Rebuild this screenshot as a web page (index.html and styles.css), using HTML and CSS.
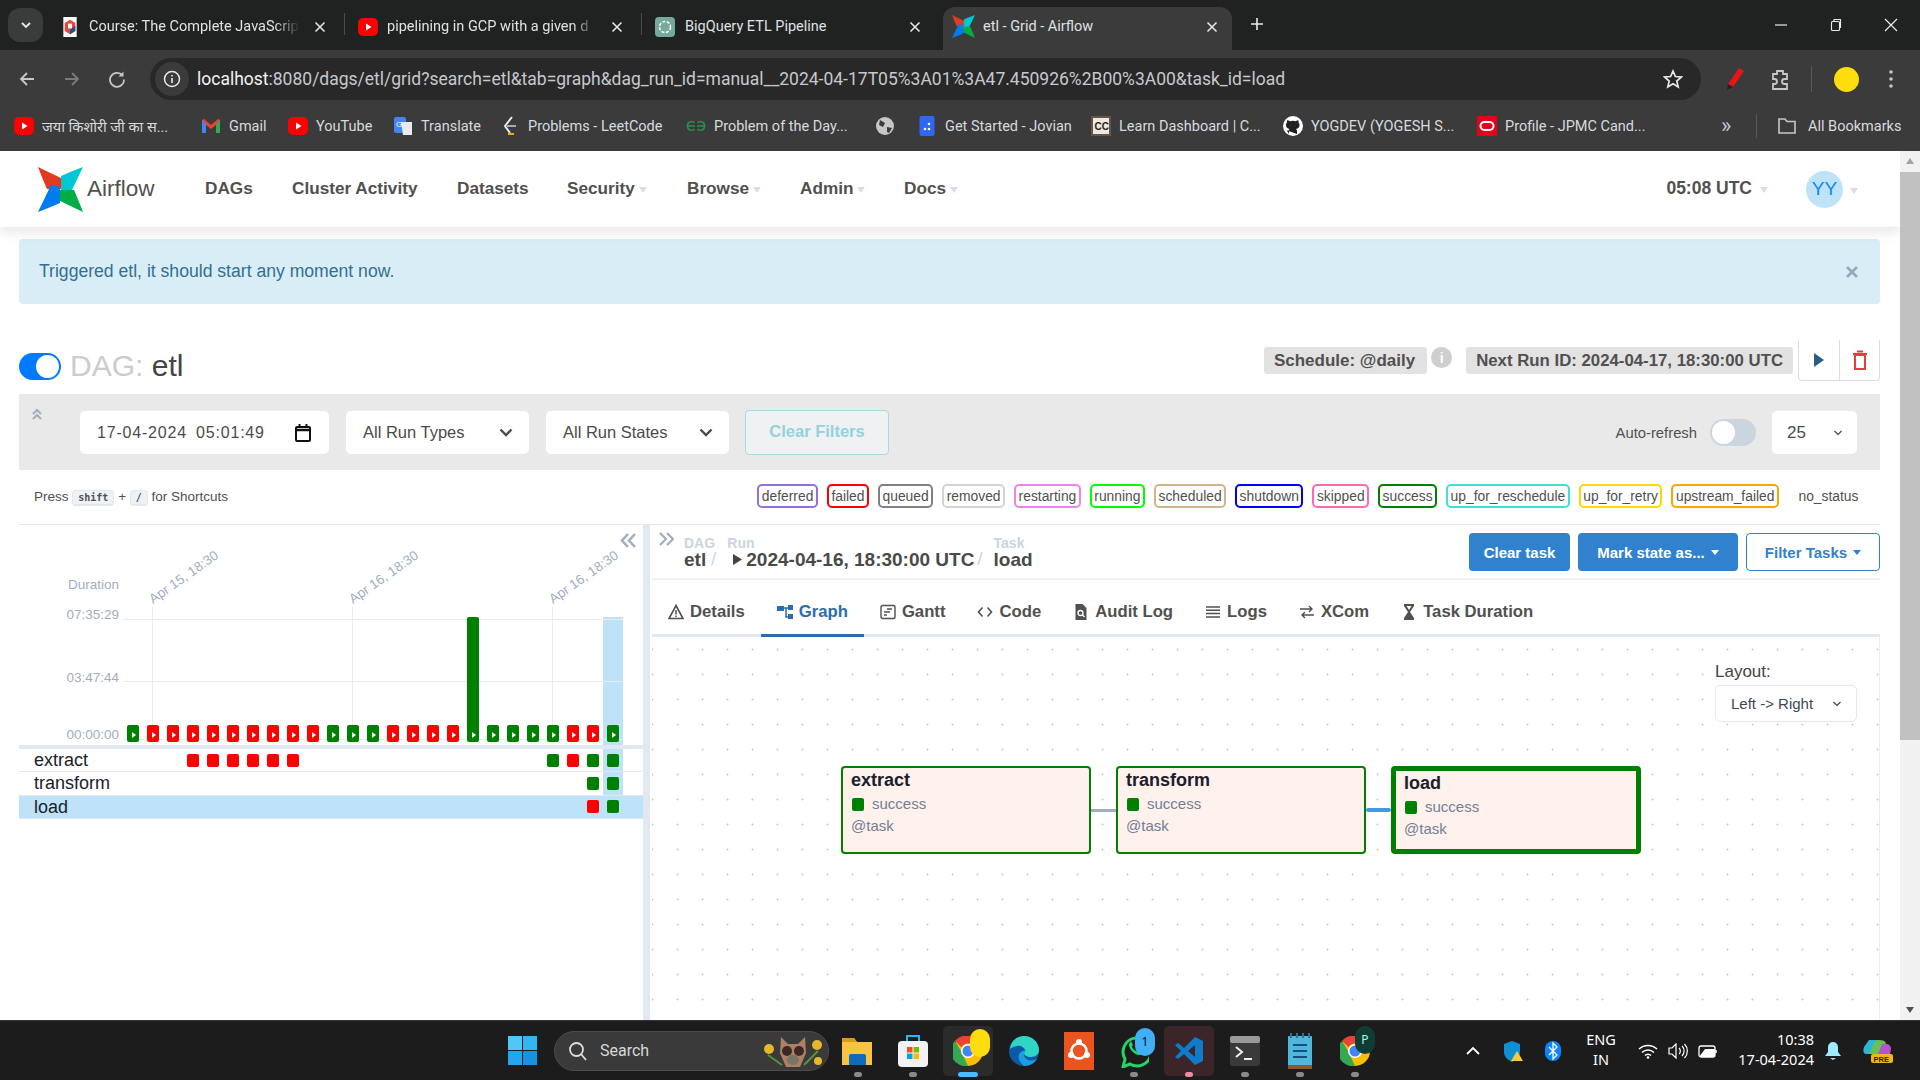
FILE: index.html
```html
<!DOCTYPE html>
<html lang="en">
<head>
<meta charset="utf-8">
<title>etl - Grid - Airflow</title>
<link rel="stylesheet" href="styles.css">
</head>
<body>
<svg class="defs" width="0" height="0" aria-hidden="true">
  <defs>
    <symbol id="yt" viewBox="0 0 20 20"><rect x="0" y="1" width="20" height="18" rx="5" fill="#f00"/><path d="M8 6.500l5.500 3.500L8 13.500z" fill="#fff"/></symbol>
    <symbol id="close" viewBox="0 0 12 12"><path d="M1.500 1.500l9 9M10.500 1.500l-9 9" stroke="#e8eaed" stroke-width="1.500" fill="none"/></symbol>
    <symbol id="logo" viewBox="0 0 45 45">
      <path d="M0 0L27 13C27 20 24 22 22 22H9C6 15 3 8 0 0z" fill="#e43921"/>
      <path d="M45 0L32 27C25 27 23 24 23 22V9C30 6 37 3 45 0z" fill="#00c7d4"/>
      <path d="M45 45L18 32C18 25 21 23 23 23H36C39 30 42 37 45 45z" fill="#00ad46"/>
      <path d="M0 45L13 18C20 18 22 21 22 23V36C15 39 8 42 0 45z" fill="#017cee"/>
    </symbol>
    <symbol id="chev" viewBox="0 0 14 9"><path d="M1.500 1.500L7 7l5.500-5.500" stroke="#4a4a4a" stroke-width="2.400" fill="none"/></symbol>
    <symbol id="chevs" viewBox="0 0 10 6"><path d="M1.500 1l3.500 3.500L8.500 1" stroke="#444" stroke-width="1.200" fill="none"/></symbol>
    <g id="gb"><rect width="12" height="17" rx="2" fill="#008000"/><path d="M5 7l4 3-4 3z" fill="#fff"/></g>
    <g id="rb"><rect width="12" height="17" rx="2" fill="#f00"/><path d="M5 7l4 3-4 3z" fill="#fff"/></g>
  </defs>
</svg>

<header class="tabstrip">
  <div class="tab-menu"><svg width="12" height="8" viewBox="0 0 12 8"><path d="M2 2l4 4 4-4" stroke="#e8eaed" stroke-width="1.800" fill="none"/></svg></div>
  <div class="tab t1">
    <svg class="fav" viewBox="0 0 20 30"><rect width="20" height="30" fill="#fff"/><path d="M10 4l8 5v12l-8 5-8-5V9z" fill="#e8483b"/><path d="M10 26l8-5V13l-8 6z" fill="#2a4b8d"/><path d="M7 10h6v7H7z" fill="#fff"/></svg>
    <span class="tab-title">Course: The Complete JavaScrip</span>
    <svg class="x"><use href="#close"/></svg>
  </div>
  <i class="tab-sep"></i>
  <div class="tab t2">
    <svg class="fav"><use href="#yt"/></svg>
    <span class="tab-title">pipelining in GCP with a given d</span>
    <svg class="x"><use href="#close"/></svg>
  </div>
  <i class="tab-sep"></i>
  <div class="tab t3">
    <svg class="fav" viewBox="0 0 20 20"><rect width="20" height="20" rx="4" fill="#74aa9c"/><circle cx="10" cy="10" r="5.500" fill="none" stroke="#fff" stroke-width="1.500" stroke-dasharray="3 1.500"/></svg>
    <span class="tab-title">BigQuery ETL Pipeline</span>
    <svg class="x"><use href="#close"/></svg>
  </div>
  <div class="tab active">
    <svg class="fav"><use href="#logo"/></svg>
    <span class="tab-title">etl - Grid - Airflow</span>
    <svg class="x"><use href="#close"/></svg>
  </div>
  <div class="tab-plus"><svg width="14" height="14" viewBox="0 0 14 14"><path d="M7 1v12M1 7h12" stroke="#e8eaed" stroke-width="1.600"/></svg></div>
  <div class="win-controls">
    <svg width="14" height="14" viewBox="0 0 14 14"><path d="M1 7h12" stroke="#e8eaed" stroke-width="1.200"/></svg>
    <svg width="14" height="14" viewBox="0 0 14 14"><rect x="2.500" y="3.500" width="8" height="9" rx="1" fill="none" stroke="#e8eaed" stroke-width="1.100"/><path d="M5 3V1.500h6.500v8H11" fill="none" stroke="#e8eaed" stroke-width="1.100"/></svg>
    <svg width="14" height="14" viewBox="0 0 14 14"><path d="M1 1l12 12M13 1L1 13" stroke="#e8eaed" stroke-width="1.200"/></svg>
  </div>
</header>

<div class="toolbar">
  <div class="nav-btns">
    <svg width="18" height="18" viewBox="0 0 18 18"><path d="M16 9H3M9 3L3 9l6 6" stroke="#c7c7c7" stroke-width="1.800" fill="none"/></svg>
    <svg width="18" height="18" viewBox="0 0 18 18"><path d="M2 9h13M9 3l6 6-6 6" stroke="#7b7b7b" stroke-width="1.800" fill="none"/></svg>
    <svg width="18" height="18" viewBox="0 0 18 18"><path d="M14.500 5.500A7 7 0 1 0 16 9.500" stroke="#c7c7c7" stroke-width="1.800" fill="none"/><path d="M15.500 1.500v5h-5z" fill="#c7c7c7"/></svg>
  </div>
  <div class="omnibox">
    <div class="info"><svg width="18" height="18" viewBox="0 0 18 18"><circle cx="9" cy="9" r="7.500" fill="none" stroke="#e8eaed" stroke-width="1.500"/><path d="M9 8v5M9 5v1.600" stroke="#e8eaed" stroke-width="1.600"/></svg></div>
    <span class="url"><b>localhost</b>:8080/dags/etl/grid?search=etl&amp;tab=graph&amp;dag_run_id=manual__2024-04-17T05%3A01%3A47.450926%2B00%3A00&amp;task_id=load</span>
    <svg class="star" width="20" height="20" viewBox="0 0 20 20"><path d="M10 2l2.400 5.500 6 .5-4.600 4 1.400 5.900L10 14.800l-5.200 3.100L6.200 12 1.600 8l6-.5z" fill="none" stroke="#e8eaed" stroke-width="1.700"/></svg>
  </div>
  <div class="tool-icons">
    <svg width="20" height="24" viewBox="0 0 20 24"><path d="M14 1l5 3L8 20l-5-3z" fill="#e81416"/><path d="M3 17l5 3-6 3z" fill="#222"/></svg>
    <svg width="22" height="24" viewBox="0 0 22 24"><path d="M8 4h6v3h4v5h-2.500a2.500 2.500 0 0 0 0 5H18v5H4v-5h1.500a2.500 2.500 0 0 0 0-5H4V7h4z" fill="none" stroke="#c7c7c7" stroke-width="1.800"/></svg>
    <i class="tool-sep"></i>
    <i class="profile"></i>
    <svg width="6" height="20" viewBox="0 0 6 20"><circle cx="3" cy="3" r="1.800" fill="#c7c7c7"/><circle cx="3" cy="10" r="1.800" fill="#c7c7c7"/><circle cx="3" cy="17" r="1.800" fill="#c7c7c7"/></svg>
  </div>
</div>

<nav class="bookmarks">
  <div class="bm"><svg class="bi"><use href="#yt"/></svg><span>जया किशोरी जी का स...</span></div>
  <div class="bm"><svg class="bi" viewBox="0 0 20 20"><path d="M1 4v13h4V9l5 4 5-4v8h4V4l-2-1-7 6-7-6z" fill="#ea4335"/><path d="M1 4v13h4V8z" fill="#4285f4"/><path d="M19 4v13h-4V8z" fill="#34a853"/></svg><span>Gmail</span></div>
  <div class="bm"><svg class="bi"><use href="#yt"/></svg><span>YouTube</span></div>
  <div class="bm"><svg class="bi" viewBox="0 0 20 20"><rect x="1" y="1" width="12" height="16" rx="2" fill="#4285f4"/><path d="M8 6h11v13H10z" fill="#e8eaed"/><text x="3" y="11" font-size="8" fill="#fff" font-family="Liberation Sans">G</text></svg><span>Translate</span></div>
  <div class="bm"><svg class="bi" viewBox="0 0 20 20"><path d="M12 1L5 10l5 7" stroke="#e8eaed" stroke-width="2" fill="none"/><path d="M7 10h9" stroke="#aaa" stroke-width="2"/><path d="M8 18h6" stroke="#f89f1b" stroke-width="2"/></svg><span>Problems - LeetCode</span></div>
  <div class="bm"><svg class="bi" viewBox="0 0 20 20"><path d="M9 10H1.500a4 4 0 0 1 7-3M11 10h7.500a4 4 0 0 0-7-3M1.500 10a4 4 0 0 0 7 3M18.500 10a4 4 0 0 1-7 3" stroke="#2f8d46" stroke-width="1.600" fill="none"/></svg><span>Problem of the Day...</span></div>
  <div class="bm"><svg class="bi" viewBox="0 0 20 20"><circle cx="10" cy="10" r="9" fill="#c7c7c7"/><path d="M5 4l5 3-2 4-4-2zM12 11l5 1-3 5-2-1z" fill="#3b3b3b"/></svg></div>
  <div class="bm"><svg class="bi" viewBox="0 0 20 20"><rect x="2.500" width="15" height="20" rx="2" fill="#2f66f5"/><circle cx="12" cy="8" r="1.300" fill="#fff"/><circle cx="12" cy="13" r="1.300" fill="#fff"/><circle cx="8" cy="13" r="1.300" fill="#fff"/></svg><span>Get Started - Jovian</span></div>
  <div class="bm"><svg class="bi" viewBox="0 0 20 20"><rect width="20" height="20" fill="#6b5344"/><rect x="2" y="2" width="16" height="16" fill="#eee8de"/><text x="3.500" y="14" font-size="10" font-weight="700" fill="#222" font-family="Liberation Sans">CC</text></svg><span>Learn Dashboard | C...</span></div>
  <div class="bm"><svg class="bi" viewBox="0 0 20 20"><circle cx="10" cy="10" r="10" fill="#fff"/><path d="M6 18v-3c-2 0-3-1-3.500-2.500M14 18v-3c0-1-.5-1.500-1-2 2-.3 3.500-1.500 3.500-4 0-1-.4-2-1-2.500.2-.8.2-1.500-.2-2.300-1 0-1.800.5-2.500 1a8 8 0 0 0-5.600 0C6 4.700 5.200 4.200 4.200 4.200 3.800 5 3.800 5.700 4 6.500c-.6.500-1 1.500-1 2.500 0 2.500 1.500 3.700 3.500 4-.5.500-1 1-1 2" fill="#202020"/></svg><span>YOGDEV (YOGESH S...</span></div>
  <div class="bm"><svg class="bi" viewBox="0 0 20 20"><rect width="20" height="20" fill="#e2001a"/><rect x="3.500" y="6" width="13" height="8" rx="4" fill="none" stroke="#fff" stroke-width="2"/></svg><span>Profile - JPMC Cand...</span></div>
  <div class="bm-more">»</div>
  <i class="bm-sep"></i>
  <div class="bm"><svg class="bi" viewBox="0 0 20 20"><path d="M2 3h6l2 2.500h8V17H2z" fill="none" stroke="#c7c7c7" stroke-width="1.600"/></svg><span>All Bookmarks</span></div>
</nav>

<div class="viewport">
  <main class="page">
    <div class="topnav">
      <div class="brand"><svg class="logo"><use href="#logo"/></svg><span>Airflow</span></div>
      <ul class="menu">
        <li>DAGs</li>
        <li>Cluster Activity</li>
        <li>Datasets</li>
        <li class="dd">Security</li>
        <li class="dd">Browse</li>
        <li class="dd">Admin</li>
        <li class="dd">Docs</li>
      </ul>
      <div class="nav-right">
        <span class="clock dd">05:08 UTC</span>
        <span class="avatar">YY</span>
        <span class="dd"></span>
      </div>
    </div>

    <div class="content">
      <div class="alert">
        <span>Triggered etl, it should start any moment now.</span>
        <svg width="12" height="12" viewBox="0 0 12 12"><path d="M1 1l10 10M11 1L1 11" stroke="#8fa9bb" stroke-width="2.500"/></svg>
      </div>

      <div class="titlebar">
        <i class="dag-toggle"></i>
        <h1><span class="muted">DAG:</span> etl</h1>
        <div class="title-right">
          <span class="chip">Schedule: @daily</span>
          <span class="info-dot">i</span>
          <span class="chip next">Next Run ID: 2024-04-17, 18:30:00 UTC</span>
          <div class="btn-pair">
            <span><svg width="12" height="14" viewBox="0 0 12 14"><path d="M1 0l10 7-10 7z" fill="#2b5d85"/></svg></span>
            <span><svg width="16" height="20" viewBox="0 0 16 20"><path d="M3 5v14h10V5z" fill="none" stroke="#e53e3e" stroke-width="2"/><path d="M1 4h14M5 1.500h6" stroke="#e53e3e" stroke-width="2"/></svg></span>
          </div>
        </div>
      </div>

      <div class="filters">
        <svg class="collapse" width="12" height="12" viewBox="0 0 12 12"><path d="M2 6l4-4 4 4M2 11l4-4 4 4" stroke="#a0aec0" stroke-width="2" fill="none"/></svg>
        <div class="field date"><span>17-04-2024 05:01:49</span>
          <svg width="16" height="18" viewBox="0 0 16 18"><rect x="1" y="3" width="14" height="14" rx="1" fill="none" stroke="#111" stroke-width="2"/><path d="M1 6h14" stroke="#111" stroke-width="2.500"/><path d="M4.500 0v3M11.500 0v3" stroke="#111" stroke-width="2"/></svg>
        </div>
        <div class="field sel"><span>All Run Types</span><svg width="14" height="9"><use href="#chev"/></svg></div>
        <div class="field sel"><span>All Run States</span><svg width="14" height="9"><use href="#chev"/></svg></div>
        <div class="clear-filters">Clear Filters</div>
        <div class="refresh">
          <span>Auto-refresh</span>
          <i class="auto-toggle"></i>
          <div class="field num"><span>25</span><svg width="10" height="6"><use href="#chevs"/></svg></div>
        </div>
      </div>

      <div class="legend">
        <div class="shortcuts">Press <kbd>shift</kbd> + <kbd>/</kbd> for Shortcuts</div>
        <div class="badges">
          <span class="b b-deferred">deferred</span>
          <span class="b b-failed">failed</span>
          <span class="b b-queued">queued</span>
          <span class="b b-removed">removed</span>
          <span class="b b-restarting">restarting</span>
          <span class="b b-running">running</span>
          <span class="b b-scheduled">scheduled</span>
          <span class="b b-shutdown">shutdown</span>
          <span class="b b-skipped">skipped</span>
          <span class="b b-success">success</span>
          <span class="b b-reschedule">up_for_reschedule</span>
          <span class="b b-retry">up_for_retry</span>
          <span class="b b-upstream">upstream_failed</span>
          <span class="b b-none">no_status</span>
        </div>
      </div>

      <div class="split">
        <section class="grid-panel">
          <svg class="chart" width="624" height="220" viewBox="19 525 624 220">
            <path d="M628 534l-6 6.500 6 6.500M635 534l-6 6.500 6 6.500" stroke="#a0aec0" stroke-width="2.500" fill="none"/>
            <rect x="603" y="617" width="20" height="128" fill="#bee3f8"/>
            <g stroke="#e8ecf1" stroke-width="1">
              <path d="M123 619.500H623M123 681.500H623M123 739.500H623"/>
              <path d="M152.500 607V740M352.500 607V740M552.500 607V740"/>
            </g>
            <g class="axis">
              <text x="119" y="589" text-anchor="end">Duration</text>
              <text x="119" y="619" text-anchor="end">07:35:29</text>
              <text x="119" y="682" text-anchor="end">03:47:44</text>
              <text x="119" y="739" text-anchor="end">00:00:00</text>
              <text transform="translate(153 604) rotate(-35)">Apr 15, 18:30</text>
              <text transform="translate(353 604) rotate(-35)">Apr 16, 18:30</text>
              <text transform="translate(553 604) rotate(-35)">Apr 16, 18:30</text>
            </g>
            <use href="#gb" x="127" y="725"/><use href="#rb" x="147" y="725"/><use href="#rb" x="167" y="725"/><use href="#rb" x="187" y="725"/><use href="#rb" x="207" y="725"/>
            <use href="#rb" x="227" y="725"/><use href="#rb" x="247" y="725"/><use href="#rb" x="267" y="725"/><use href="#rb" x="287" y="725"/><use href="#rb" x="307" y="725"/>
            <use href="#gb" x="327" y="725"/><use href="#gb" x="347" y="725"/><use href="#gb" x="367" y="725"/><use href="#rb" x="387" y="725"/><use href="#rb" x="407" y="725"/>
            <use href="#rb" x="427" y="725"/><use href="#rb" x="447" y="725"/>
            <rect x="467" y="617" width="12" height="125" rx="2" fill="#008000"/><path d="M472 732l4 3-4 3z" fill="#fff"/>
            <use href="#gb" x="487" y="725"/><use href="#gb" x="507" y="725"/><use href="#gb" x="527" y="725"/><use href="#gb" x="547" y="725"/>
            <use href="#rb" x="567" y="725"/><use href="#rb" x="587" y="725"/><use href="#gb" x="607" y="725"/>
          </svg>
          <div class="task-rows">
            <div class="trow">
              <span class="tname">extract</span>
              <i class="sq r at3"></i><i class="sq r"></i><i class="sq r"></i><i class="sq r"></i><i class="sq r"></i><i class="sq r"></i>
              <i class="sq g at21"></i><i class="sq r"></i><i class="sq g"></i><b class="hi"><i class="sq g"></i></b>
            </div>
            <div class="trow">
              <span class="tname">transform</span>
              <i class="sq g at23"></i><b class="hi"><i class="sq g"></i></b>
            </div>
            <div class="trow selected">
              <span class="tname">load</span>
              <i class="sq r at23"></i><b class="hi"><i class="sq g"></i></b>
            </div>
          </div>
        </section>
        <i class="splitter"></i>
        <section class="detail">
          <div class="crumbs">
            <svg class="expand" width="16" height="14" viewBox="0 0 16 14"><path d="M2 1l6 6-6 6M9 1l6 6-6 6" stroke="#a0aec0" stroke-width="2.200" fill="none"/></svg>
            <div class="crumb c-dag"><small>DAG</small><strong>etl</strong></div>
            <span class="slash">/</span>
            <div class="crumb c-run"><small>Run</small><strong><svg width="9" height="11" viewBox="0 0 9 11"><path d="M0 0l9 5.500L0 11z" fill="#444"/></svg>2024-04-16, 18:30:00 UTC</strong></div>
            <span class="slash">/</span>
            <div class="crumb"><small>Task</small><strong>load</strong></div>
            <div class="actions">
              <span class="act solid">Clear task</span>
              <span class="act solid caret">Mark state as...</span>
              <span class="act outline caret">Filter Tasks</span>
            </div>
          </div>
          <div class="tabs">
            <div class="tb"><svg viewBox="0 0 16 16"><path d="M8 1.500L15 14.500H1z" fill="none" stroke="#51504f" stroke-width="1.600"/><path d="M8 6v4.500M8 11.500V13" stroke="#51504f" stroke-width="1.500"/></svg>Details</div>
            <div class="tb on"><svg viewBox="0 0 16 16"><path d="M0 2h7v5H0zM11 1h5v5h-5zM11 10h5v5h-5z" fill="#2b6cb0"/><path d="M7 4h4M9 4v9h2" stroke="#2b6cb0" stroke-width="1.500" fill="none"/></svg>Graph</div>
            <div class="tb"><svg viewBox="0 0 16 16"><rect x="1" y="1.500" width="14" height="13" rx="1.500" fill="none" stroke="#51504f" stroke-width="1.400"/><path d="M7 5h5M4 8h6M4 11h3" stroke="#51504f" stroke-width="1.400"/></svg>Gantt</div>
            <div class="tb"><svg viewBox="0 0 16 16"><path d="M5.500 3.500L1.500 8l4 4.500M10.500 3.500l4 4.500-4 4.500" fill="none" stroke="#51504f" stroke-width="1.600"/></svg>Code</div>
            <div class="tb"><svg viewBox="0 0 16 16"><path d="M2.500 0h7l4 4v12h-11z" fill="#51504f"/><circle cx="7.500" cy="9" r="2.500" fill="none" stroke="#fff" stroke-width="1.300"/><path d="M9.500 11l2 2" stroke="#fff" stroke-width="1.300"/></svg>Audit Log</div>
            <div class="tb"><svg viewBox="0 0 16 16"><path d="M1 3h14M1 6.300h14M1 9.600h14M1 13h14" stroke="#51504f" stroke-width="1.500"/></svg>Logs</div>
            <div class="tb"><svg viewBox="0 0 16 16"><path d="M1 5h12M10 2l3 3-3 3M15 11H3M6 8l-3 3 3 3" fill="none" stroke="#51504f" stroke-width="1.400"/></svg>XCom</div>
            <div class="tb"><svg viewBox="0 0 16 16"><path d="M3 0h10v2L9 8l4 6v2H3v-2l4-6-4-6z" fill="#51504f"/><path d="M5.500 2h5L8 6z" fill="#fff"/></svg>Task Duration</div>
          </div>
          <div class="canvas">
            <div class="layout-box">
              <label>Layout:</label>
              <div class="layout-sel"><span>Left -&gt; Right</span><svg width="10" height="6"><use href="#chevs"/></svg></div>
            </div>
            <div class="dag">
              <article class="node"><h3>extract</h3><p><i class="sq g"></i>success</p><p class="op">@task</p></article>
              <i class="edge"></i>
              <article class="node"><h3>transform</h3><p><i class="sq g"></i>success</p><p class="op">@task</p></article>
              <i class="edge blue"></i>
              <article class="node current"><h3>load</h3><p><i class="sq g"></i>success</p><p class="op">@task</p></article>
            </div>
          </div>
        </section>
      </div>
    </div>
  </main>
  <aside class="scrollbar">
    <svg width="20" height="20" viewBox="0 0 20 20"><path d="M10 7l-4 6h8z" fill="#a3a3a3"/></svg>
    <div class="thumb"></div>
    <svg class="sb-down" width="20" height="20" viewBox="0 0 20 20"><path d="M10 13l-4-6h8z" fill="#505050"/></svg>
  </aside>
</div>

<footer class="taskbar">
  <div class="task-center">
    <div class="ti"><svg width="29" height="29" viewBox="0 0 29 29"><path d="M0 0h14v14H0z" fill="#4fc8f7"/><path d="M15 0h14v14H15z" fill="#33b5f0"/><path d="M0 15h14v14H0z" fill="#22a6ec"/><path d="M15 15h14v14H15z" fill="#1593e3"/></svg></div>
    <div class="search">
      <svg width="20" height="20" viewBox="0 0 20 20"><circle cx="8.500" cy="8.500" r="6.500" fill="none" stroke="#ddd" stroke-width="1.800"/><path d="M13 13l5 6" stroke="#ddd" stroke-width="1.800"/></svg>
      <span>Search</span>
      <svg class="badger" width="62" height="40" viewBox="0 0 62 40"><circle cx="7" cy="18" r="5" fill="#e5b92b"/><circle cx="55" cy="14" r="5" fill="#e5b92b"/><circle cx="56" cy="30" r="4" fill="#e5b92b"/><path d="M6 24l14 10M56 20L42 34" stroke="#5c8f3a" stroke-width="2"/><path d="M19 6l7 7h10l7-7 1 16-6 14H24l-6-14z" fill="#b07f63"/><circle cx="25" cy="20" r="5" fill="#3a2a26"/><circle cx="37" cy="20" r="5" fill="#3a2a26"/><ellipse cx="31" cy="29" rx="6" ry="5" fill="#776"/></svg>
    </div>
    <div class="ti tall dot"><svg width="31" height="29" viewBox="0 0 31 29"><path d="M0 2h12l3 4h15v23H0z" fill="#f6c343"/><path d="M0 2h12l3 4H0z" fill="#d99b16"/><path d="M9 18h13a2 2 0 0 1 2 2v9H7v-9a2 2 0 0 1 2-2z" fill="#0f6cbd"/></svg></div>
    <div class="ti dot"><svg width="30" height="32" viewBox="0 0 30 32"><path d="M9 7V1h12v6" fill="none" stroke="#29b6f6" stroke-width="2"/><rect y="6" width="30" height="26" rx="4" fill="#f3f3f3"/><path d="M9 12h5.500v5.500H9z" fill="#f25022"/><path d="M15.500 12H21v5.500h-5.500z" fill="#7fba00"/><path d="M9 18.500h5.500V24H9z" fill="#00a4ef"/><path d="M15.500 18.500H21V24h-5.500z" fill="#ffb900"/></svg></div>
    <div class="ti running">
      <svg width="30" height="30" viewBox="0 0 30 30"><circle cx="15" cy="15" r="15" fill="#fbbc04"/><path d="M15 0a15 15 0 0 1 13 7.500H15a7.500 7.500 0 0 0-6.500 3.750L2 4.800A15 15 0 0 1 15 0z" fill="#ea4335"/><path d="M2 4.800l6.500 11.200 6.500 14A15 15 0 0 1 2 4.800z" fill="#34a853"/><circle cx="15" cy="15" r="7" fill="#fff"/><circle cx="15" cy="15" r="5.500" fill="#4285f4"/></svg>
      <i class="notif yellow"></i>
    </div>
    <div class="ti"><svg width="30" height="30" viewBox="0 0 30 30"><circle cx="15" cy="15" r="15" fill="#0c59a4"/><path d="M1 13C2 5 8 0 15 0c8 0 15 6 15 14 0 4-3 7-8 7-4 0-7-2-7-4 0-1 .5-2 1.500-2.500C15 11 11 9 8 10c-3 .5-6 2-7 3z" fill="#2fd5c5"/><path d="M15 30a15 15 0 0 0 13-7c-6 3-13 1-13-5 0-2 1-3 1.500-3.500-5 0-8 4-6.500 9 1 3 3 5 5 6.500z" fill="#1b9de2"/></svg></div>
    <div class="ti"><svg width="30" height="38" viewBox="0 0 30 38"><rect width="30" height="38" fill="#e95420"/><circle cx="15" cy="19" r="7.500" fill="none" stroke="#fff" stroke-width="2.500"/><circle cx="15" cy="10" r="3" fill="#fff"/><circle cx="7" cy="23" r="3" fill="#fff"/><circle cx="23" cy="23" r="3" fill="#fff"/></svg></div>
    <div class="ti dot">
      <svg width="30" height="34" viewBox="0 0 30 34"><path d="M4 33l2-8a14 14 0 1 1 5 5z" fill="none" stroke="#25d366" stroke-width="3"/><path d="M10 10c-1 4 6 12 11 11l2-3-4-2-1.500 1.500C15 16 13 14 13 12.500L14 11l-2-4z" fill="#25d366"/></svg>
      <i class="notif blue">1</i>
    </div>
    <div class="ti active-red dot pink"><svg width="30" height="30" viewBox="0 0 30 30"><path d="M21 1l8 4v20l-8 4-11-11-6 5-3-2 6-6-6-6 3-2 6 5z" fill="#0e7ccb"/><path d="M21 9l-7 6 7 6z" fill="#3b2528"/></svg></div>
    <div class="ti dot"><svg width="30" height="30" viewBox="0 0 30 30"><rect width="30" height="30" rx="3" fill="#3a3a3a"/><rect width="30" height="7" rx="2" fill="#9a9a9a"/><path d="M6 11l6 5-6 5" fill="none" stroke="#eee" stroke-width="2"/><path d="M14 23h8" stroke="#eee" stroke-width="2"/></svg></div>
    <div class="ti dot"><svg width="24" height="36" viewBox="0 0 24 36"><rect y="3" width="24" height="33" rx="1" fill="#4fb6dc"/><path d="M0 32h24v4H0z" fill="#8a5a2b"/><path d="M5 12h14M5 18h14M5 24h14" stroke="#17507a" stroke-width="2"/><path d="M3 0v5M9 0v5M15 0v5M21 0v5" stroke="#26739c" stroke-width="2"/></svg></div>
    <div class="ti dot">
      <svg width="30" height="30" viewBox="0 0 30 30"><circle cx="15" cy="15" r="15" fill="#fbbc04"/><path d="M15 0a15 15 0 0 1 13 7.500H15a7.500 7.500 0 0 0-6.500 3.750L2 4.800A15 15 0 0 1 15 0z" fill="#ea4335"/><path d="M2 4.800l6.500 11.200 6.500 14A15 15 0 0 1 2 4.800z" fill="#34a853"/><circle cx="15" cy="15" r="7" fill="#fff"/><circle cx="15" cy="15" r="5.500" fill="#4285f4"/></svg>
      <i class="notif dark">P</i>
    </div>
  </div>
  <div class="tray">
    <svg class="t-chev" width="16" height="10" viewBox="0 0 16 10"><path d="M2 8l6-6 6 6" stroke="#fff" stroke-width="1.800" fill="none"/></svg>
    <svg class="t-shield" width="20" height="22" viewBox="0 0 20 22"><path d="M9 1l8 3v8c0 5-4 8-8 10-4-2-8-5-8-10V4z" fill="#0f8fd6"/><path d="M14 11l6 10H8z" fill="#ffc83d"/></svg>
    <svg class="t-bt" width="16" height="20" viewBox="0 0 16 20"><rect width="16" height="20" rx="8" fill="#0a84ff"/><path d="M4 6l8 8-4 4V2l4 4-8 8" fill="none" stroke="#fff" stroke-width="1.300"/></svg>
    <div class="lang">ENG<br>IN</div>
    <svg class="t-wifi" width="20" height="16" viewBox="0 0 20 16"><path d="M1 6a13 13 0 0 1 18 0M4 9.500a8.500 8.500 0 0 1 12 0M7 12.500a4 4 0 0 1 6 0" fill="none" stroke="#fff" stroke-width="1.500"/><circle cx="10" cy="14.500" r="1.300" fill="#fff"/></svg>
    <svg class="t-vol" width="20" height="16" viewBox="0 0 20 16"><path d="M1 5h3l4-4v14l-4-4H1z" fill="none" stroke="#fff" stroke-width="1.200"/><path d="M11 5a4 4 0 0 1 0 6M14 3a7 7 0 0 1 0 10M16.500 1a10 10 0 0 1 0 14" fill="none" stroke="#fff" stroke-width="1.200"/></svg>
    <svg class="t-bat" width="20" height="16" viewBox="0 0 20 16"><rect x="1" y="3" width="16" height="11" rx="2" fill="none" stroke="#fff" stroke-width="1.300"/><path d="M1 14l6-8h10v8z" fill="#fff"/><path d="M18 7v3" stroke="#fff" stroke-width="1.500"/></svg>
    <div class="time">10:38<br>17-04-2024</div>
    <svg class="t-bell" width="16" height="20" viewBox="0 0 16 20"><path d="M8 1a5 5 0 0 1 5 5v5l3 4H0l3-4V6a5 5 0 0 1 5-5z" fill="#9eeaff"/><path d="M5 17h6l-3 2z" fill="#9eeaff"/></svg>
    <svg class="t-cop" width="30" height="26" viewBox="0 0 30 26"><path d="M6 2h10l-6 14H3C0 16 0 12 1 9z" fill="#2fb4d9"/><path d="M16 2c-3 0-5 2-6 5l-4 9h12l5-11c-1-2-3-3-7-3z" fill="#6bbf59"/><path d="M19 6h4c3 0 5 2 5 5l-1 5H15z" fill="#b455c9"/><rect x="8" y="16" width="22" height="9" rx="2" fill="#f2b61c"/><text x="10.500" y="23.500" font-size="7.500" font-weight="700" fill="#222" font-family="Liberation Sans">PRE</text></svg>
  </div>
</footer>
</body>
</html>
```

FILE: styles.css
```css
* { box-sizing: border-box; }
html, body { margin: 0; height: 100%; }
body {
  width: 1920px; height: 1080px; overflow: hidden;
  display: flex; flex-direction: column;
  font-family: "Liberation Sans", Arial, sans-serif;
  color: #51504f;
}
.defs { position: absolute; }
h1, h3, p, ul { margin: 0; padding: 0; }
li { list-style: none; }

/* browser chrome */
.tabstrip {
  height: 50px; flex: none; background: #202221; display: flex; align-items: flex-end;
  padding-left: 8px; position: relative;
  font-family: Roboto, "Noto Sans", sans-serif; color: #dfe1e5; font-size: 14.500px;
}
.tab-menu {
  width: 35px; height: 34px; margin-bottom: 8px; border-radius: 12px; background: #3a3b3b;
  display: flex; align-items: center; justify-content: center; margin-right: 17px;
}
.tab { height: 43px; display: flex; align-items: center; padding-bottom: 4px; flex: none; }
.tab-title { overflow: hidden; white-space: nowrap; }
.fav { width: 20px; height: 20px; flex: none; }
.x { width: 12px; height: 12px; flex: none; margin-left: auto; }
.t1 .tab-title, .t2 .tab-title {
  -webkit-mask-image: linear-gradient(90deg, #000 88%, transparent);
  mask-image: linear-gradient(90deg, #000 88%, transparent);
}
.t1 { width: 284px; } .t1 .tab-title { width: 211px; margin-left: 9px; } .t1 .x { margin-right: 18px; }
.t2 { width: 283px; margin-left: 13px; } .t2 .tab-title { width: 210px; margin-left: 9px; } .t2 .x { margin-right: 18px; }
.t3 { width: 274px; margin-left: 13px; } .t3 .tab-title { margin-left: 10px; } .t3 .x { margin-right: 8px; }
.tab-sep { width: 1px; height: 22px; background: #4a4c4c; margin-bottom: 15px; flex: none; }
.tab.active {
  width: 289px; margin-left: 14px; background: #3b3b3b; border-radius: 12px 12px 0 0; padding-left: 9px;
}
.active .fav { width: 23px; height: 23px; }
.active .tab-title { margin-left: 8px; }
.active .x { margin-right: 14px; }
.tab-plus { margin: 0 0 11px 18px; height: 30px; display: flex; align-items: center; }
.win-controls {
  margin-left: auto; height: 50px; align-self: flex-start; display: flex; align-items: center;
  gap: 41px; padding-right: 22px;
}

.toolbar {
  height: 58px; flex: none; background: #3b3b3b; display: flex; align-items: flex-start;
  padding: 8px 0 0 18px; font-family: Roboto, "Noto Sans", sans-serif;
}
.nav-btns { display: flex; gap: 27px; padding-top: 12px; margin-right: 24px; }
.omnibox {
  width: 1551px; height: 42px; background: #282828; border-radius: 21px; display: flex; align-items: center;
  color: #c6c9cd; font-size: 17.500px;
}
.info {
  width: 34px; height: 34px; margin: 0 8px 0 5px; background: #3b3b3b; border-radius: 50%;
  display: flex; align-items: center; justify-content: center;
}
.url { white-space: nowrap; }
.url b { font-weight: 400; color: #f1f3f4; }
.star { margin-left: auto; margin-right: 18px; }
.tool-icons { display: flex; align-items: center; height: 42px; margin-left: 24px; }
.tool-icons svg:nth-child(2) { margin-left: 24px; }
.tool-sep { width: 1px; height: 26px; background: #5a5a5a; margin: 0 22px 0 20px; }
.profile { width: 25px; height: 25px; border-radius: 50%; background: #fddd0d; margin-right: 29px; }

.bookmarks {
  height: 43px; flex: none; background: #3b3b3b; font-family: Roboto, "Noto Sans", "Noto Sans CJK SC", sans-serif;
  color: #d7dadf; font-size: 14.500px; padding: 0 0 7px 14px;
  display: grid; align-items: center;
  grid-template-columns: 187px 87px 105px 107px 186px 189px 42px 174px 192px 194px 230px 49px 1px 1fr;
}
.bm { display: flex; align-items: center; gap: 8px; white-space: nowrap; }
.bi { width: 20px; height: 20px; flex: none; }
.bm-more { font-size: 22px; justify-self: start; margin-left: 14px; color: #c7c7c7; line-height: 1; }
.bm-sep { width: 1px; height: 24px; background: #5a5a5a; }
.bm:last-child { margin-left: 20px; gap: 11px; }

/* page */
.viewport { flex: 1; display: flex; min-height: 0; }
.page { width: 1900px; background: #fff; overflow: hidden; position: relative; }
.scrollbar { width: 20px; background: #f1f1f1; display: flex; flex-direction: column; }
.thumb { height: 568px; background: #c1c1c1; margin-top: 1px; }
.sb-down { margin-top: auto; }

.topnav {
  height: 76px; display: flex; align-items: center; padding-left: 38px; background: #fff;
  box-shadow: 0 5px 12px rgba(0,0,0,.1); position: relative;
}
.brand { display: flex; align-items: center; width: 167px; font-size: 22.500px; color: #51504f; gap: 4px; }
.logo { width: 45px; height: 45px; }
.menu { display: grid; font-weight: 700; font-size: 17.200px; grid-template-columns: 87px 165px 110px 120px 113px 104px auto; padding-bottom: 2px; }
.dd::after {
  content: ""; display: inline-block; margin-left: 4px; vertical-align: 1px;
  border: 4.500px solid transparent; border-top: 6px solid #e2d9e6; border-bottom: 0;
}
.nav-right { margin-left: auto; display: flex; align-items: center; padding-right: 42px; font-weight: 700; font-size: 17.500px; }
.clock { padding-bottom: 2px; }
.clock::after { margin-left: 8px; }
.avatar {
  width: 37px; height: 37px; border-radius: 50%; background: #bee3f8; color: #0e87e8; font-weight: 400;
  display: flex; align-items: center; justify-content: center; margin-left: 38px; font-size: 19px;
}
.nav-right .dd:last-child::after { margin-left: 7px; }

.content { padding: 12px 20px 0 19px; }
.alert {
  height: 65px; background: #d9edf7; border-radius: 4px; display: flex; align-items: center; justify-content: space-between;
  padding: 0 22px 0 20px; color: #31708f; font-size: 17.600px;
}
.titlebar { height: 90px; display: flex; align-items: center; padding-top: 34px; }
.dag-toggle {
  width: 42px; height: 27px; border-radius: 14px; background: #007bff; display: flex; justify-content: flex-end; padding: 2px;
}
.dag-toggle::after { content: ""; width: 23px; height: 23px; border-radius: 50%; background: #fff; }
h1 { font-weight: 400; font-size: 30px; color: #444; margin-left: 9px; line-height: 1; }
.muted { color: #ccc; }
.title-right { margin-left: auto; display: flex; align-items: flex-start; font-size: 17px; font-weight: 700; color: #51504f; align-self: flex-start; margin-top: 2px; }
.chip { background: #e2e2e2; height: 27px; border-radius: 3px; padding: 0 12px 0 10px; display: flex; align-items: center; margin-top: 7px; }
.next { margin-left: 14px; padding: 0 10px; font-size: 16.800px; }
.info-dot {
  width: 21px; height: 21px; border-radius: 50%; background: #cfcfcf; color: #fff; font-size: 14px;
  display: flex; align-items: center; justify-content: center; margin: 7px 0 0 4px;
}
.btn-pair { display: flex; border: 1px solid #ddd; border-top: 0; border-radius: 0 0 4px 4px; height: 41px; margin-left: 5px; }
.btn-pair span { width: 40px; display: flex; align-items: center; justify-content: center; }
.btn-pair span + span { border-left: 1px solid #ddd; }

.filters {
  height: 76px; background: #e9e9ea; border-top: 1px solid #e2e8f0; display: flex; align-items: center; position: relative; padding-left: 61px;
}
.collapse { position: absolute; left: 12px; top: 13px; }
.field {
  height: 43px; background: #fff; border-radius: 5px; display: flex; align-items: center; justify-content: space-between;
  color: #4a4a4a; font-size: 16.500px;
}
.date { width: 249px; padding: 0 18px 0 17px; font-size: 16px; letter-spacing: .8px; word-spacing: 4px; }
.sel { width: 183px; margin-left: 17px; padding: 0 16px 0 17px; }
.clear-filters {
  width: 144px; height: 45px; margin-left: 16px; border: 1.500px solid #a6dbe6; border-radius: 4px; background: #f0f1f2;
  color: #93d2de; font-size: 16.500px; font-weight: 700; display: flex; align-items: center; justify-content: center; padding-bottom: 2px;
}
.refresh { margin-left: auto; display: flex; align-items: center; font-size: 14.800px; padding-right: 23px; color: #51504f; }
.auto-toggle {
  width: 46px; height: 27px; border-radius: 14px; background: #cbd5e0; margin: 0 16px 0 13px; padding: 2px; display: flex;
}
.auto-toggle::after { content: ""; width: 23px; height: 23px; border-radius: 50%; background: #fff; }
.num { width: 85px; padding: 0 14px 0 15px; }
.num span { font-size: 17px; }

.legend {
  height: 55px; display: flex; align-items: center; justify-content: space-between; border-bottom: 1px solid #e2e8f0; padding: 0 17px 2px 15px;
}
.shortcuts { font-size: 13.500px; color: #51504f; }
kbd {
  font-family: "DejaVu Sans Mono", monospace; font-size: 10px; background: #edf2f7; border: 1px solid #e2e8f0; border-bottom-width: 2px;
  border-radius: 4px; padding: 1px 5px; font-weight: 700;
}
.badges { display: flex; gap: 9px; font-size: 13.850px; }
.b { height: 24px; padding: 0 2.500px; border: 2px solid; border-radius: 5px; display: flex; align-items: center; color: #51504f; }
.b-deferred { border-color: #9370db; } .b-failed { border-color: #f00; } .b-queued { border-color: #808080; }
.b-removed { border-color: #d3d3d3; } .b-restarting { border-color: #ee82ee; } .b-running { border-color: #0f0; }
.b-scheduled { border-color: #d2b48c; } .b-shutdown { border-color: #00f; } .b-skipped { border-color: #ff69b4; }
.b-success { border-color: #008000; } .b-reschedule { border-color: #40e0d0; } .b-retry { border-color: #ffd700; }
.b-upstream { border-color: #ffa500; } .b-none { border-color: transparent; margin-left: 6px; }

.split { display: flex; height: 495px; }
.grid-panel { width: 624px; flex: none; }
.chart { display: block; }
.axis text { font-size: 13.500px; fill: #a0aec0; }
.task-rows { border-top: 4px solid #e2e8f0; }
.trow {
  height: 23.500px; display: grid; grid-template-columns: 104px repeat(25, 20px); align-items: center; border-bottom: 1px solid #e2e8f0;
}
.trow:first-child { height: 23px; }
.tname { font-size: 18px; color: #1a202c; padding-left: 15px; grid-column: 1; line-height: 1; white-space: nowrap; }
.sq { width: 12px; height: 13px; border-radius: 2px; display: block; justify-self: center; }
.sq.g { background: #008000; } .sq.r { background: #f00; }
.at3 { grid-column: 5; } .at21 { grid-column: 23; } .at23 { grid-column: 25; }
.hi { height: 100%; grid-column: 26; background: #bee3f8; display: flex; align-items: center; justify-content: center; }
.selected { background: #bee3f8; }
.splitter { width: 7px; background: #e2e8f0; flex: none; }
.detail { flex: 1; display: flex; flex-direction: column; padding-left: 2px; min-width: 0; }
.crumbs { height: 55px; display: flex; align-items: flex-start; border-bottom: 2px solid #edf2f7; padding-top: 11px; position: relative; padding-left: 32px; }
.expand { position: absolute; left: 6px; top: 7px; }
.crumb { display: flex; flex-direction: column; line-height: 1; }
.crumb small { font-size: 14px; font-weight: 700; color: #cbd5e0; height: 13px; }
.crumb strong { font-size: 19px; color: #4a4a4a; margin-top: 1px; display: flex; align-items: center; gap: 4px; white-space: nowrap; }
.c-dag { width: 27px; }
.slash { color: #cbd5e0; font-size: 19px; margin: 13px 11px 0 0; line-height: 1; }
.c-run { width: 250px; }
.c-run strong { padding-left: 6px; }
.actions { margin-left: auto; display: flex; gap: 8px; margin-top: -3px; font-weight: 700; font-size: 15px; }
.act { height: 38px; border-radius: 4px; display: flex; align-items: center; justify-content: center; }
.act.solid { background: #3182ce; color: #fff; }
.act.outline { border: 1px solid #3182ce; color: #3182ce; width: 134px; }
.act:nth-child(1) { width: 101px; } .act:nth-child(2) { width: 160px; }
.caret::after {
  content: ""; margin-left: 6px; border: 4px solid transparent; border-top: 5px solid currentColor; border-bottom: 0;
}
.tabs { height: 57px; display: flex; border-bottom: 3px solid #e2e8f0; font-size: 16.700px; font-weight: 700; color: #51504f; }
.tb { display: flex; align-items: center; gap: 6px; padding: 6px 16px 0; height: 57px; }
.tb svg { width: 16px; height: 16px; }
.tb.on { color: #2b6cb0; border-bottom: 3px solid #2b6cb0; padding-top: 9px; }
.canvas {
  flex: 1; position: relative; border-right: 1px solid #e8edf3;
  background-image: radial-gradient(circle at center, #c9c9c9 .9px, transparent 1.100px);
  background-size: 25px 25px; background-position: -12px 0;
  display: flex; flex-direction: column; align-items: flex-start;
}
.layout-box { align-self: flex-end; margin: 25px 22px 0 0; width: 142px; }
.layout-box label { display: block; color: #444; font-size: 17px; line-height: 20px; margin-bottom: 3px; background: #fff; }
.layout-sel {
  height: 37px; background: #fff; border: 1px solid #e2e8f0; border-radius: 5px; display: flex; align-items: center; justify-content: space-between;
  padding: 0 14px 0 15px; color: #3e4655; font-size: 15px;
}
.dag { display: flex; align-items: center; margin: 44px 0 0 189px; }
.node {
  width: 250px; height: 88px; background: #fff1ec; border: 2px solid #008000; border-radius: 4px; padding: 1px 8px; font-size: 15px; color: #718096;
}
.node h3 { font-size: 18px; color: #1a202c; line-height: 22px; margin-bottom: 2px; }
.node p { display: flex; align-items: center; gap: 8px; line-height: 22px; margin-bottom: 0; }
.node .sq { height: 13px; margin-left: 1px; }
.node.current { border-width: 5px; padding: 1px 8px; }
.edge { width: 25px; height: 3px; background: #a0aec0; }
.edge.blue { background: #4299e1; height: 4px; }

/* taskbar */
.taskbar {
  height: 60px; flex: none; background: #1c1c1c; border-top: 1px solid #333; display: flex; align-items: center; position: relative; color: #fff;
  font-family: "Noto Sans", sans-serif;
}
.task-center { display: flex; align-items: center; padding-left: 495px; width: 1430px; }
.ti {
  width: 55px; height: 50px; display: flex; align-items: center; justify-content: center; position: relative; flex: none; border-radius: 5px;
}
.search {
  width: 275px; height: 40px; border-radius: 20px; background: #3a3a3a; border: 1px solid #4c4c4c; display: flex; align-items: center; padding-left: 13px; margin: 0 1px 0 4px; gap: 12px;
  color: #d8d8d8; font-size: 16px; flex: none; font-family: Roboto, sans-serif;
}
.badger { margin-left: auto; margin-right: 4px; }
.ti.dot::after, .running::after {
  content: ""; position: absolute; bottom: -1px; left: 50%; margin-left: -4px; width: 8px; height: 5px; border-radius: 3px; background: #8a8a8a;
}
.running { background: #2b2b2b; width: 50px; margin: 0 3px; }
.running::after { width: 20px; margin-left: -10px; background: #4db8ff; }
.active-red { background: #3c2528; width: 50px; margin: 0 3px; }
.ti.pink::after { background: #f08da0; }
.notif {
  position: absolute; right: 7px; top: 3px; width: 20px; height: 20px; border-radius: 50%; font-style: normal; font-size: 12px; display: flex; align-items: center; justify-content: center;
}
.yellow { background: #fddd0d; width: 20px; height: 28px; right: 3px; border-radius: 10px; }
.blue { background: #42aef5; color: #111; height: 28px; border-radius: 10px; right: 6px; top: 2px; }
.dark { background: #0f3d36; color: #9fd; height: 28px; border-radius: 10px; right: 7px; top: 0; }
.tray { display: flex; align-items: center; flex: 1; position: relative; height: 100%; font-size: 14.500px; }
.t-chev { margin-left: 35px; }
.t-shield { margin-left: 22px; }
.t-bt { margin-left: 22px; }
.lang { width: 50px; margin: 0 0 3px 15px; text-align: center; line-height: 20px; }
.t-wifi { margin-left: 12px; }
.t-vol { margin-left: 10px; }
.t-bat { margin-left: 10px; }
.time { width: 96px; text-align: right; line-height: 20px; margin: 0 0 3px; }
.t-bell { margin-left: 11px; }
.t-cop { margin-left: 22px; }
```
